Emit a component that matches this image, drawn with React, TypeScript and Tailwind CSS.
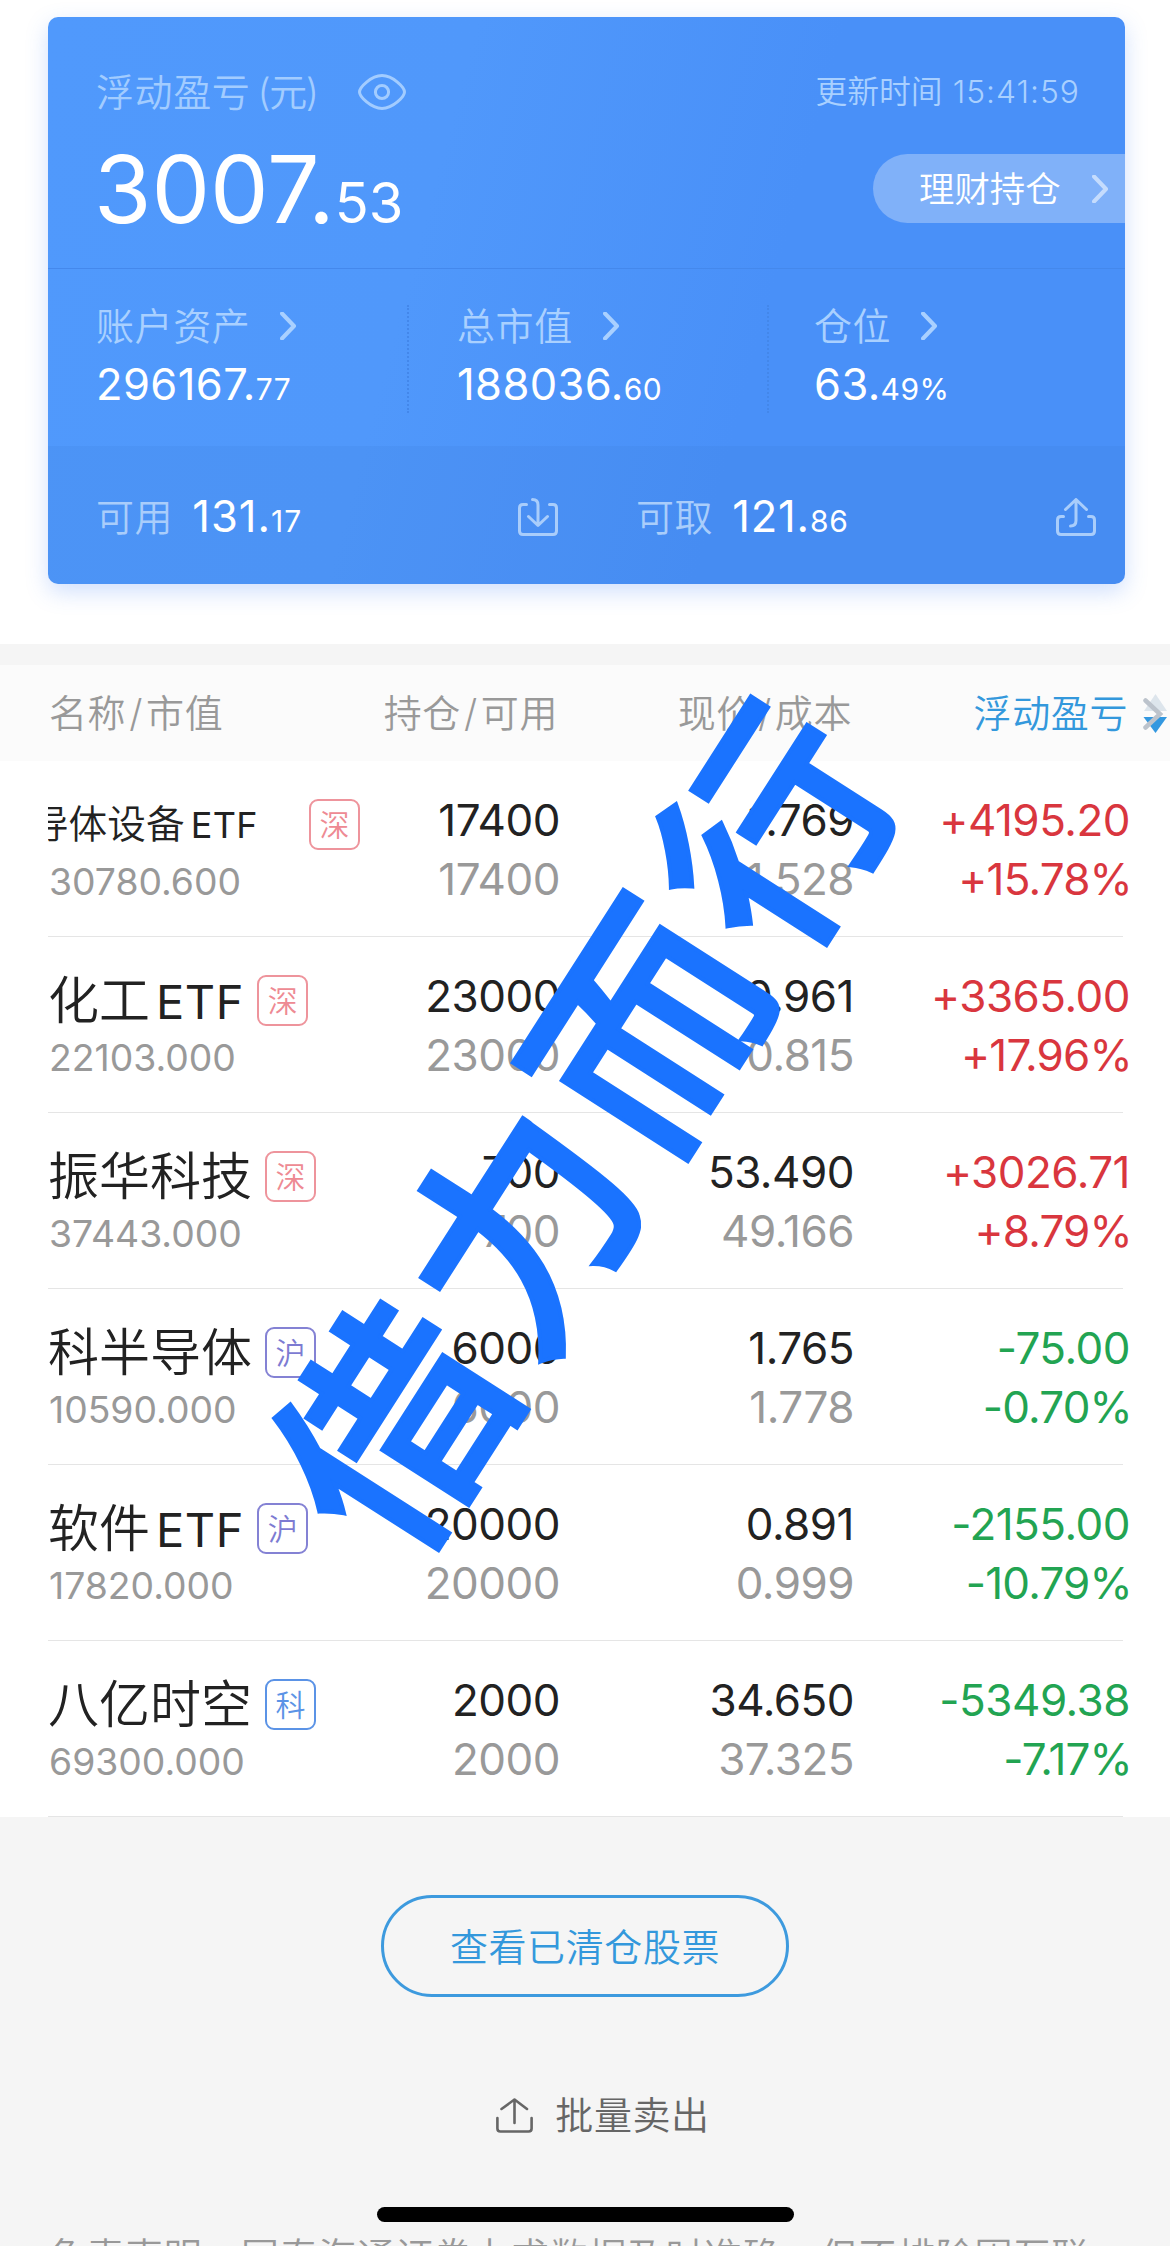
type Holding = {
  name: string;
  tag: string;
  value: string;
  qty: string;
  avail: string;
  price: string;
  cost: string;
  pnl: string;
  pct: string;
  long?: boolean;
};

const HOLDINGS: Holding[] = [
  { name: "半导体设备ETF", tag: "深", value: "30780.600", qty: "17400", avail: "17400", price: "1.769", cost: "1.528", pnl: "+4195.20", pct: "+15.78%", long: true },
  { name: "化工ETF", tag: "深", value: "22103.000", qty: "23000", avail: "23000", price: "0.961", cost: "0.815", pnl: "+3365.00", pct: "+17.96%" },
  { name: "振华科技", tag: "深", value: "37443.000", qty: "700", avail: "700", price: "53.490", cost: "49.166", pnl: "+3026.71", pct: "+8.79%" },
  { name: "科半导体", tag: "沪", value: "10590.000", qty: "6000", avail: "6000", price: "1.765", cost: "1.778", pnl: "-75.00", pct: "-0.70%" },
  { name: "软件ETF", tag: "沪", value: "17820.000", qty: "20000", avail: "20000", price: "0.891", cost: "0.999", pnl: "-2155.00", pct: "-10.79%" },
  { name: "八亿时空", tag: "科", value: "69300.000", qty: "2000", avail: "2000", price: "34.650", cost: "37.325", pnl: "-5349.38", pct: "-7.17%" },
];

const TAG_STYLES: Record<string, string> = {
  深: "border-[#ee949c] text-[#ee8a93]",
  沪: "border-[#8482d4] text-[#7d7bd2]",
  科: "border-[#5b93e6] text-[#5b93e6]",
};

const Chevron = ({ className = "" }: { className?: string }) => (
  <svg viewBox="0 0 17 28" className={`w-[17px] h-[28px] ${className}`} fill="none" stroke="currentColor" strokeWidth="4">
    <path d="M2 1.5 L14 14 L2 26.5" strokeLinecap="round" strokeLinejoin="round" />
  </svg>
);

const EyeIcon = () => (
  <svg viewBox="0 0 48 36" className="w-[48px] h-[36px]" fill="none" stroke="currentColor" strokeWidth="3">
    <path d="M1.5 18 C1.5 13.5 13 1.6 24 1.6 S46.5 13.5 46.5 18 S35 34.4 24 34.4 S1.5 22.5 1.5 18 Z" />
    <circle cx="24" cy="18" r="6.6" />
  </svg>
);

const DepositIcon = () => (
  <svg viewBox="0 0 40 38" className="w-[40px] h-[38px]" fill="none" stroke="currentColor" strokeWidth="3" strokeLinecap="round" strokeLinejoin="round">
    <path d="M8.5 6.5 H5 Q1.5 6.5 1.5 10 V33 Q1.5 36.5 5 36.5 H35 Q38.5 36.5 38.5 33 V10 Q38.5 6.5 35 6.5 H31.5" />
    <path d="M14.5 1.5 Q20 1.5 20 7 V27 M10.5 18.5 L20 27.5 L29.5 18.5" />
  </svg>
);

const WithdrawIcon = () => (
  <svg viewBox="0 0 40 38" className="w-[40px] h-[38px]" fill="none" stroke="currentColor" strokeWidth="3" strokeLinecap="round" strokeLinejoin="round">
    <path d="M7.5 18.5 H5 Q1.5 18.5 1.5 22 V33 Q1.5 36.5 5 36.5 H35 Q38.5 36.5 38.5 33 V22 Q38.5 18.5 35 18.5 H32.5" />
    <path d="M14.5 28 Q20 28 20 22.5 V2 M9.5 11.5 L20 1.5 L30.5 11.5" />
  </svg>
);

const ExportIcon = () => (
  <svg viewBox="0 0 37 35" className="w-[37px] h-[35px]" fill="none" stroke="currentColor" strokeWidth="2.6" strokeLinecap="round" strokeLinejoin="round">
    <path d="M1.4 20 V30.5 Q1.4 33.5 4.4 33.5 H32.6 Q35.6 33.5 35.6 30.5 V20" />
    <path d="M18.5 25 V1.5 M5.5 11 L18.5 1.5 L31 11" />
  </svg>
);

const Amount = ({ whole, frac, className = "tracking-[0.4px]" }: { whole: string; frac: string; className?: string }) => (
  <span className={`text-[43.5px] leading-[56px] text-white font-normal ${className}`}>
    {whole}.<span className="text-[30px]">{frac}</span>
  </span>
);

const Stat = ({ label, whole, frac, className }: { label: string; whole: string; frac: string; className: string }) => (
  <div className={`flex flex-col ${className}`}>
    <div className="flex items-center gap-[30px] text-[#a9d0ff]">
      <span className="text-[38px] leading-[60px] tracking-[0.6px]">{label}</span>
      <Chevron />
    </div>
    <Amount whole={whole} frac={frac} />
  </div>
);

const DottedRule = () => <div className="w-0 h-[108px] mt-[9px] border-l-2 border-dotted border-[#4387ea]" />;

const AccountCard = () => (
  <div className="h-[567px] ml-[48px] mr-[45px] rounded-[10px] overflow-hidden shadow-[0_8px_22px_rgba(73,130,248,0.25)] bg-[linear-gradient(105deg,#5099fc_0%,#5098fb_35%,#4990f8_65%,#4990f8_100%)]">
    <div className="h-[251px] flex justify-between">
      <div className="pl-[48px] pt-[45px]">
        <div className="flex items-center text-[#a2ccff]">
          <span className="text-[38px] leading-[60px] tracking-[0.6px]">浮动盈亏<span className="ml-[7px] tracking-[-1.4px]">(元)</span></span>
          <span className="ml-[40px] -mt-[1px]"><EyeIcon /></span>
        </div>
        <div className="text-[93px] leading-[112px] mt-[11px] -ml-[2px] text-white font-normal">
          3007.<span className="text-[56px]">53</span>
        </div>
      </div>
      <div className="flex flex-col items-end">
        <div className="mt-[45px] mr-[45px] text-[31.8px] leading-[60px] text-[#a9d0ff]">更新时间<span className="ml-[10px] tracking-[1px]">15:41:59</span></div>
        <div className="mt-[32px] w-[252px] h-[69px] pl-[46px] pr-[16px] flex items-center justify-between rounded-l-full bg-[#80b1f9] text-white">
          <span className="pt-[2px] text-[35.4px] leading-none">理财持仓</span>
          <Chevron className="text-[#c5dcfd]" />
        </div>
      </div>
    </div>
    <div className="h-[178px] flex border-t border-[#4488ec] pt-[27px]">
      <Stat label="账户资产" whole="296167" frac="77" className="w-[359px] pl-[48px]" />
      <DottedRule />
      <Stat label="总市值" whole="188036" frac="60" className="w-[358px] pl-[48px]" />
      <DottedRule />
      <Stat label="仓位" whole="63" frac="49%" className="pl-[45px]" />
    </div>
    <div className="h-[138px] flex items-center bg-[#2f6fc8]/10 pl-[48px] pr-[29px] pt-[3px]">
      <div className="w-[540px] flex items-center">
        <span className="pt-[2px] text-[38px] tracking-[0.6px] text-[#a9cdfb] mr-[19px]">可用</span>
        <Amount whole="131" frac="17" className="tracking-[1px] pt-[4px]" />
        <span className="ml-auto mr-[78px] text-[#a9cdfb]"><DepositIcon /></span>
      </div>
      <span className="pt-[2px] text-[38px] tracking-[0.6px] text-[#a9cdfb] mr-[19px]">可取</span>
      <Amount whole="121" frac="86" className="tracking-[0.8px] pt-[4px]" />
      <span className="ml-auto text-[#a9cdfb]"><WithdrawIcon /></span>
    </div>
  </div>
);

const Slash = () => <span className="mx-[3px]">/</span>;

const SortIcon = () => (
  <svg viewBox="0 0 24 40" className="w-[24px] h-[40px]">
    <path d="M12.5 0 L24 17 H1 Z" fill="#dde5ec" />
    <path d="M0.5 23 H24 L12.5 39 Z" fill="#3398e0" />
    <path d="M2.5 6.5 L17 20 L2.5 33.5" fill="none" stroke="#bcc3cc" strokeWidth="4.5" strokeLinecap="round" />
  </svg>
);

const TableHeader = () => (
  <div className="h-[96px] pt-[1px] flex items-center bg-[#fbfbfb] text-[38px] tracking-[0.6px] text-[#999999]">
    <div className="w-[260px] pl-[49px]">名称<Slash />市值</div>
    <div className="w-[298px] text-right">持仓<Slash />可用</div>
    <div className="w-[294px] text-right">现价<Slash />成本</div>
    <div className="w-[276px] text-right text-[#3398dc]">浮动盈亏</div>
    <div className="ml-[15px]"><SortIcon /></div>
  </div>
);

const Pair = ({ top, bottom, className }: { top: string; bottom: string; className: string }) => (
  <div className={`pt-[30px] text-right text-[44px] leading-[58.5px] font-normal tracking-[-0.5px] ${className}`}>
    <div>{top}</div>
    <div>{bottom}</div>
  </div>
);

const HoldingName = ({ name, long }: { name: string; long?: boolean }) => {
  const latin = name.endsWith("ETF");
  const cjk = latin ? name.slice(0, -3) : name;
  if (long) {
    return (
      <div className="w-[252px] mr-[9px] overflow-hidden whitespace-nowrap flex justify-end text-[38.7px] leading-[51px]">
        <span className="mr-[42px]">{cjk}<span className="ml-[6px] text-[36px] font-normal tracking-[0.4px]">ETF</span></span>
      </div>
    );
  }
  return (
    <div className="mr-[13px] whitespace-nowrap text-[51px] leading-[51px]">
      {cjk}{latin && <span className="ml-[6px] text-[47px] font-normal tracking-[0.6px]">ETF</span>}
    </div>
  );
};

const HoldingRow = ({ h }: { h: Holding }) => {
  const trend = h.pnl.startsWith("+") ? "text-[#d9363e]" : "text-[#22a452]";
  return (
    <div className="h-[176px] flex relative after:absolute after:left-[48px] after:right-[47px] after:bottom-0 after:h-px after:bg-[#e5e5e5]">
      <div className="w-[360px] pl-[48px] pt-[38px]">
        <div className="flex items-center h-[51px] text-[#222222]">
          <HoldingName name={h.name} long={h.long} />
          <span className={`w-[51px] h-[51px] shrink-0 flex items-center justify-center border-2 rounded-[9px] text-[30px] leading-none ${TAG_STYLES[h.tag]}`}>{h.tag}</span>
        </div>
        <div className="mt-[10px] ml-[1px] text-[37.3px] leading-[44px] font-normal text-[#999999]">{h.value}</div>
      </div>
      <Pair top={h.qty} bottom={h.avail} className="w-[200px] text-[#222222] [&>div:last-child]:text-[#999999]" />
      <Pair top={h.price} bottom={h.cost} className="w-[294px] text-[#222222] [&>div:last-child]:text-[#999999]" />
      <Pair top={h.pnl} bottom={h.pct} className={`w-[276px] [&>div:last-child]:-mr-[2px] [&>div:last-child]:tracking-[-0.8px] ${trend}`} />
    </div>
  );
};

export default function App() {
  return (
    <div className="relative w-[1170px] h-[2246px] overflow-hidden bg-[#f5f5f5] font-['Inter','Noto_Sans_CJK_SC',sans-serif] font-[350]">
      <div className="h-[644px] bg-white pt-[17px]">
        <AccountCard />
      </div>
      <div className="mt-[21px] bg-white">
        <TableHeader />
        {HOLDINGS.map((h) => (
          <HoldingRow key={h.name} h={h} />
        ))}
      </div>
      <div className="flex flex-col items-center">
        <button className="mt-[78px] pt-[2px] w-[408px] h-[102px] rounded-full border-[3px] border-[#3d9ade] text-[38px] tracking-[0.6px] text-[#3398dc]">查看已清仓股票</button>
        <button className="mt-[88px] ml-[36px] h-[60px] flex items-center gap-[22px] text-[38px] tracking-[0.6px] text-[#666666]">
          <ExportIcon />
          批量卖出
        </button>
      </div>
      <p className="mt-[83px] pl-[48px] whitespace-nowrap text-[38px] tracking-[0.6px] leading-[56px] text-[#999999]">免责声明：国泰海通证券力求数据及时准确，但不排除因互联</p>

      <div className="absolute left-[377px] top-[2207px] w-[417px] h-[15px] rounded-full bg-black" />

      <div className="absolute left-[116px] top-[1007px] w-[948px] h-[237px] flex items-center justify-center rotate-[-57.4deg] whitespace-nowrap text-[227px] leading-[237px] tracking-[10px] font-medium text-[#1a73ff] [-webkit-text-stroke:4px_#1a73ff]">借力而行</div>
    </div>
  );
}
